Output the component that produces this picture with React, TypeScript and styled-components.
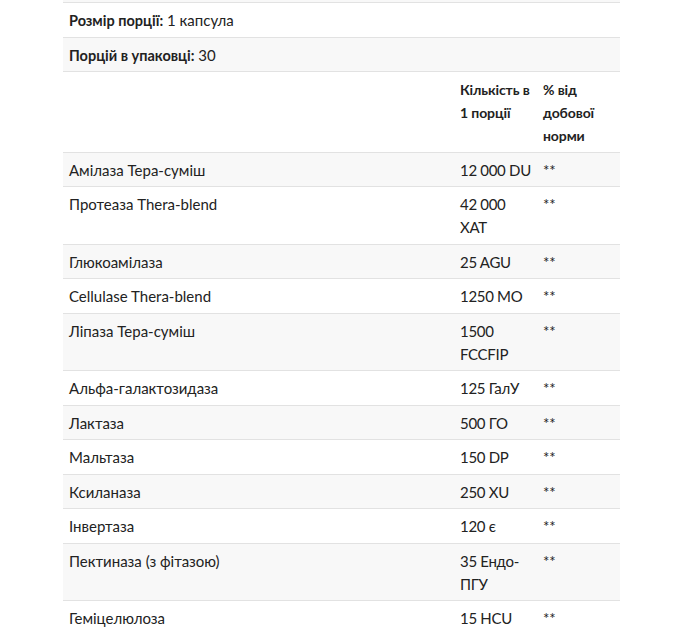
import React from "react";
import styled, { createGlobalStyle } from "styled-components";

const Global = createGlobalStyle`
  html, body { margin: 0; padding: 0; background: #fff; }
  body { font-family: Lato, "Open Sans", "Liberation Sans", sans-serif; color: #222; }
`;

const Page = styled.div`
  width: 557px;
  margin-left: 63px;
  border-top: 2px solid #f8f8f8;
`;

const Table = styled.table`
  width: 100%;
  border-collapse: collapse;
  table-layout: fixed;
  font-size: 15px;
  line-height: 23px;
`;

const Row = styled.tr<{ $shaded?: boolean }>`
  background: ${(p) => (p.$shaded ? "#f8f8f8" : "#fff")};
  border-top: 1px solid #e2e2e2;
`;

const Cell = styled.td<{ $bold?: boolean; $tight?: boolean }>`
  padding: 6px 6px 4.5px 6px;
  vertical-align: top;
  text-align: left;
  font-weight: ${(p) => (p.$bold ? 700 : 400)};
  font-size: ${(p) => (p.$bold ? "14px" : "inherit")};
  letter-spacing: ${(p) => (p.$bold ? "-0.1px" : p.$tight ? "-0.3px" : "0")};
`;

const Col = styled.col<{ $w?: number }>`
  width: ${(p) => (p.$w ? `${p.$w}px` : "auto")};
`;

const Label = styled.strong`
  font-weight: 700;
  font-size: 14.5px;
`;

const Group = styled.span`
  white-space: nowrap;
`;

const rows: [string, string][] = [
  ["Амілаза Тера-суміш", "12 000 DU"],
  ["Протеаза Thera-blend", "42 000 XAT"],
  ["Глюкоамілаза", "25 AGU"],
  ["Cellulase Thera-blend", "1250 МО"],
  ["Ліпаза Тера-суміш", "1500 FCCFIP"],
  ["Альфа-галактозидаза", "125 ГалУ"],
  ["Лактаза", "500 ГО"],
  ["Мальтаза", "150 DP"],
  ["Ксиланаза", "250 XU"],
  ["Інвертаза", "120 є"],
  ["Пектиназа (з фітазою)", "35 Ендо-ПГУ"],
  ["Геміцелюлоза", "15 HCU"],
];

function Amount({ value }: { value: string }) {
  const m = value.match(/^(\d+ \d+) (.*)$/);
  if (!m) return <>{value}</>;
  return (
    <>
      <Group>{m[1]}</Group> {m[2]}
    </>
  );
}

export default function App() {
  return (
    <>
      <Global />
      <Page>
        <Table>
          <colgroup>
            <Col />
            <Col $w={83} />
            <Col $w={83} />
          </colgroup>
          <tbody>
            <Row>
              <Cell colSpan={3}>
                <Label>Розмір порції:</Label> 1 капсула
              </Cell>
            </Row>
            <Row $shaded>
              <Cell colSpan={3}>
                <Label>Порцій в упаковці:</Label> 30
              </Cell>
            </Row>
            <Row>
              <Cell></Cell>
              <Cell $bold>Кількість в 1 порції</Cell>
              <Cell $bold>% від добової норми</Cell>
            </Row>
            {rows.map(([name, amount], i) => (
              <Row key={name} $shaded={i % 2 === 0}>
                <Cell>{name}</Cell>
                <Cell $tight>
                  <Amount value={amount} />
                </Cell>
                <Cell>**</Cell>
              </Row>
            ))}
          </tbody>
        </Table>
      </Page>
    </>
  );
}
